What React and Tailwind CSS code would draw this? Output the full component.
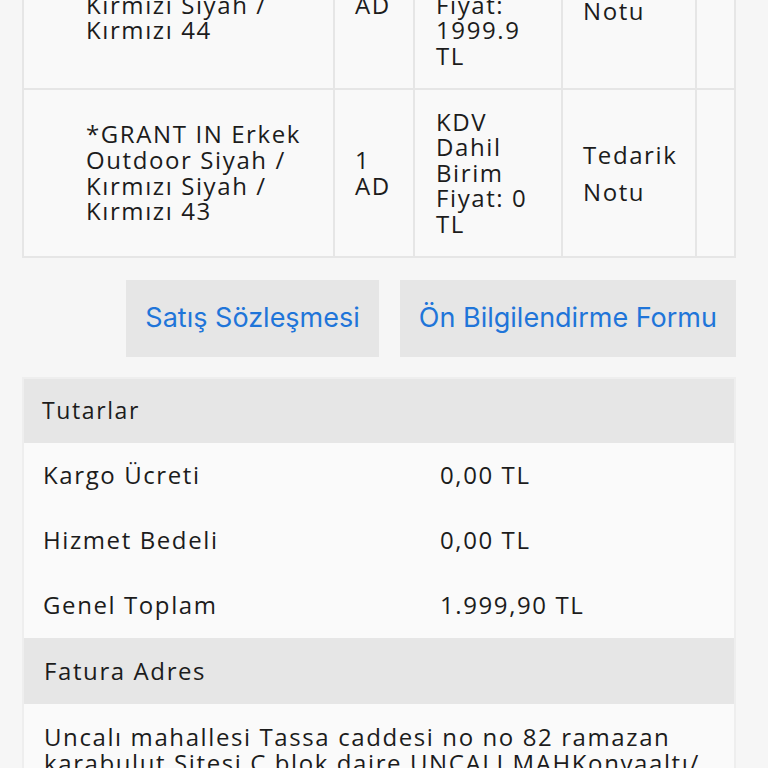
import React from 'react';

const font = "font-['Open_Sans',sans-serif]";

const rows = [
    {
        product: ['*GRANT IN Erkek', 'Outdoor Siyah /', 'Kırmızı Siyah /', 'Kırmızı 44'],
        qty: ['1', 'AD'],
        price: ['KDV', 'Dahil', 'Birim', 'Fiyat:', '1999.9', 'TL'],
    },
    {
        product: ['*GRANT IN Erkek', 'Outdoor Siyah /', 'Kırmızı Siyah /', 'Kırmızı 43'],
        qty: ['1', 'AD'],
        price: ['KDV', 'Dahil', 'Birim', 'Fiyat: 0', 'TL'],
    },
];

const totals = [
    { label: 'Kargo Ücreti', value: '0,00 TL' },
    { label: 'Hizmet Bedeli', value: '0,00 TL' },
    { label: 'Genel Toplam', value: '1.999,90 TL' },
];

const Lines = ({ lines }) => (
    <div className="leading-[25.6px]">
        {lines.map((line, i) => (
            <div key={i}>{line}</div>
        ))}
    </div>
);

const cell = 'border-2 border-[#e6e6e6] align-middle';

const OrderTable = () => (
    <table className="w-full border-collapse table-fixed bg-[#f9f9f9] -mt-[106px]">
        <colgroup>
            <col className="w-[311px]" />
            <col className="w-[80px]" />
            <col className="w-[148px]" />
            <col className="w-[134px]" />
            <col />
        </colgroup>
        <tbody>
            {rows.map((row, i) => (
                <tr key={i}>
                    <td className={`${cell} py-[19px] pl-[62px]`}>
                        <Lines lines={row.product} />
                    </td>
                    <td className={`${cell} pl-[20px]`}>
                        <Lines lines={row.qty} />
                    </td>
                    <td className={`${cell} py-[19px] pl-[21px]`}>
                        <Lines lines={row.price} />
                    </td>
                    <td className={`${cell} pl-[20px] leading-[37px]`}>
                        <div>Tedarik</div>
                        <div>Notu</div>
                    </td>
                    <td className={cell}></td>
                </tr>
            ))}
        </tbody>
    </table>
);

export default function App() {
    return (
        <div className={`h-[768px] overflow-hidden bg-[#f6f6f6] ${font} text-[24px] tracking-[1.6px] text-[#1c1c1c]`}>
            <div className="ml-[22px] mr-[32px]">
                <OrderTable />

                <div className="flex justify-end gap-[21px] mt-[22px]">
                    {['Satış Sözleşmesi', 'Ön Bilgilendirme Formu'].map((label) => (
                        <button
                            key={label}
                            className="h-[77px] px-[19px] bg-[#e6e6e6] text-[#1f75d9] font-['Inter',sans-serif] text-[27px] tracking-normal"
                        >
                            {label}
                        </button>
                    ))}
                </div>

                <div className="mt-[20px] border-2 border-[#eeeeee] bg-[#fafafa]">
                    <div className="h-[64px] flex items-center pl-[18px] bg-[#e6e6e6] text-[23px]">Tutarlar</div>
                    {totals.map((t) => (
                        <div key={t.label} className="h-[65px] grid grid-cols-[416px_1fr] items-center">
                            <div className="pl-[19px]">{t.label}</div>
                            <div>{t.value}</div>
                        </div>
                    ))}
                    <div className="h-[66px] flex items-center pl-[20px] bg-[#e6e6e6]">Fatura Adres</div>
                    <div className="pt-[20px] px-[20px] leading-[26px]">
                        Uncalı mahallesi Tassa caddesi no no 82 ramazan karabulut Sitesi C blok daire UNCALI MAHKonyaaltı/ Antalya
                    </div>
                </div>
            </div>
        </div>
    );
}
